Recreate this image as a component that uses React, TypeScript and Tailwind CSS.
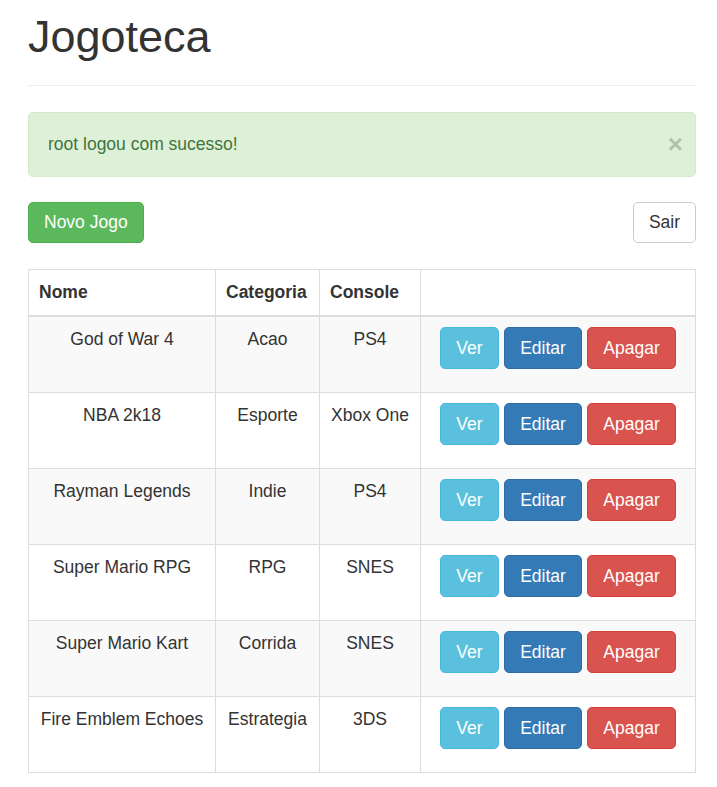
import React from "react";

type Jogo = { nome: string; categoria: string; console: string };

const jogos: Jogo[] = [
  { nome: "God of War 4", categoria: "Acao", console: "PS4" },
  { nome: "NBA 2k18", categoria: "Esporte", console: "Xbox One" },
  { nome: "Rayman Legends", categoria: "Indie", console: "PS4" },
  { nome: "Super Mario RPG", categoria: "RPG", console: "SNES" },
  { nome: "Super Mario Kart", categoria: "Corrida", console: "SNES" },
  { nome: "Fire Emblem Echoes", categoria: "Estrategia", console: "3DS" },
];

export default function App() {
  return (
    <div className="min-h-screen bg-white text-[#333] text-[17.5px] leading-[25px] [font-family:'Liberation_Sans',Arial,sans-serif]">
      <div className="pl-[28px] pr-[21px]">
        {/* Page header */}
        <div className="pb-[11px] border-b border-[#eee]">
          <h1 className="mt-[12px] mb-[12.5px] text-[45px] leading-[49.5px] font-normal">Jogoteca</h1>
        </div>

        {/* Flash message */}
        <div className="mt-[26px] flex items-center justify-between rounded-[5px] border border-[#d6e9c6] bg-[#dff0d8] py-[19px] pl-[19px] pr-[12px] text-[#3c763d]">
          <span>root logou com sucesso!</span>
          <button className="text-[26px] font-bold leading-none text-black opacity-20 -mt-[2px]">×</button>
        </div>

        {/* Actions */}
        <div className="mt-[25px] flex items-center justify-between">
          <button className="h-[41px] rounded-[5px] border border-[#4cae4c] bg-[#5cb85c] px-[15px] text-white">
            Novo Jogo
          </button>
          <button className="h-[41px] rounded-[5px] border border-[#ccc] bg-white px-[15px] text-[#333]">
            Sair
          </button>
        </div>

        {/* Games table */}
        <table className="mt-[26px] w-[668px] table-fixed border-collapse border border-[#ddd]">
          <colgroup>
            <col className="w-[187px]" />
            <col className="w-[104px]" />
            <col className="w-[101px]" />
            <col />
          </colgroup>
          <thead>
            <tr>
              <th className="border border-b-2 border-[#ddd] p-[10px] text-left font-bold">Nome</th>
              <th className="border border-b-2 border-[#ddd] p-[10px] text-left font-bold">Categoria</th>
              <th className="border border-b-2 border-[#ddd] p-[10px] text-left font-bold">Console</th>
              <th className="border border-b-2 border-[#ddd] p-[10px]"></th>
            </tr>
          </thead>
          <tbody>
            {jogos.map((jogo, i) => (
              <tr key={jogo.nome} className={i % 2 === 0 ? "bg-[#f9f9f9]" : "bg-white"}>
                <td className="border border-[#ddd] p-[10px] text-center align-top">
                  <div className="h-[55px]">{jogo.nome}</div>
                </td>
                <td className="border border-[#ddd] p-[10px] text-center align-top">{jogo.categoria}</td>
                <td className="border border-[#ddd] p-[10px] text-center align-top">{jogo.console}</td>
                <td className="border border-[#ddd] p-[10px] align-top">
                  <div className="flex justify-center gap-[5px]">
                    <button className="h-[42px] w-[59px] rounded-[5px] border border-[#46b8da] bg-[#5bc0de] text-white">Ver</button>
                    <button className="h-[42px] w-[78px] rounded-[5px] border border-[#2e6da4] bg-[#337ab7] text-white">Editar</button>
                    <button className="h-[42px] w-[89px] rounded-[5px] border border-[#d43f3a] bg-[#d9534f] text-white">Apagar</button>
                  </div>
                </td>
              </tr>
            ))}
          </tbody>
        </table>
      </div>
    </div>
  );
}
